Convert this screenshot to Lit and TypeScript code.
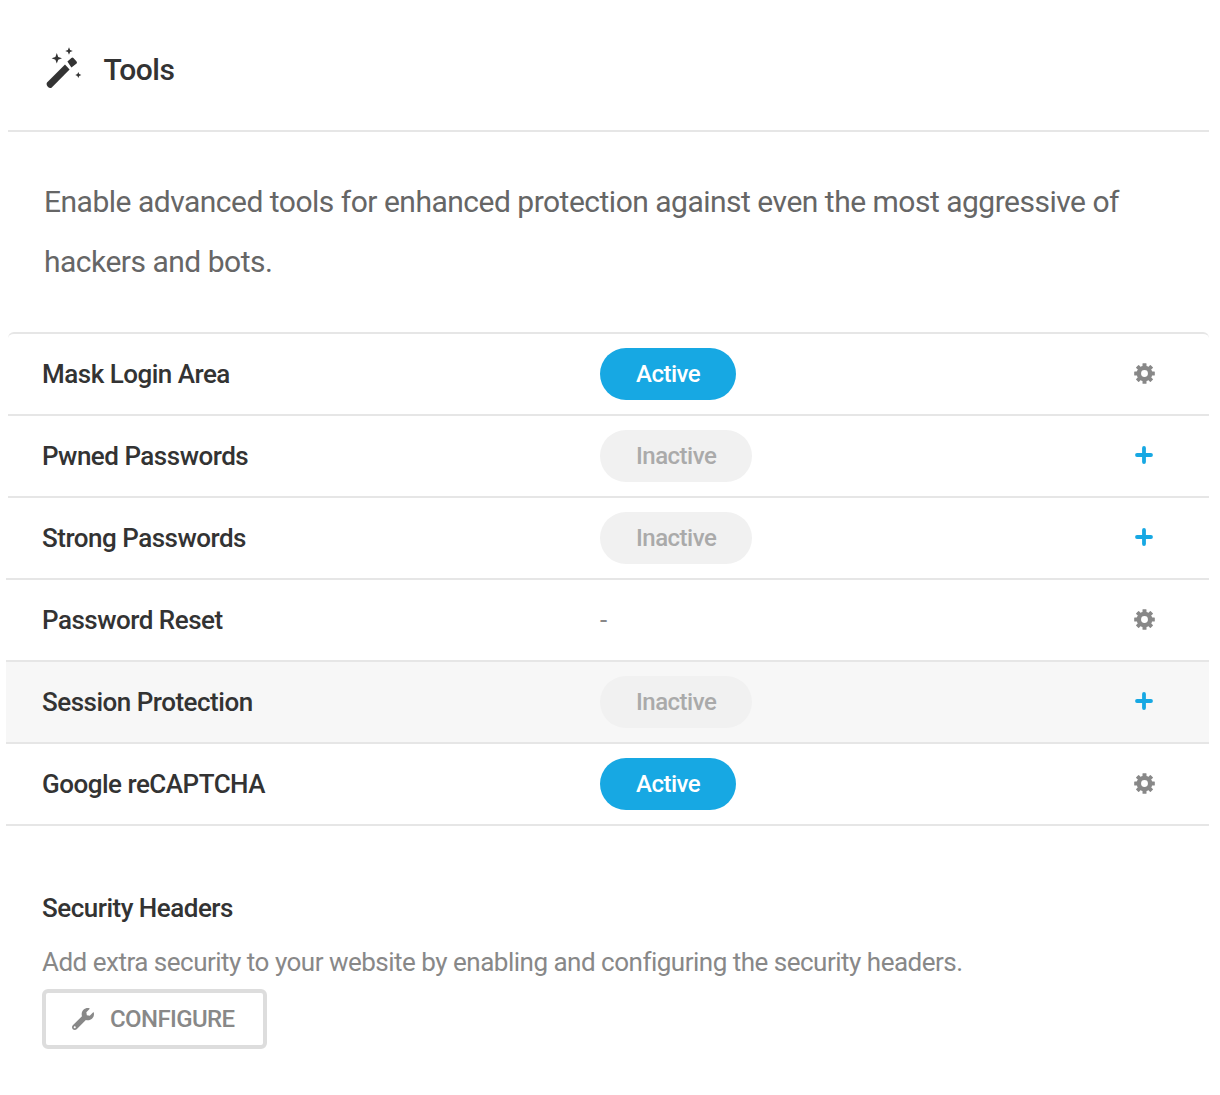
import { LitElement, html, css, svg } from "lit";
import { customElement } from "lit/decorators.js";

const teeth = [0, 45, 90, 135, 180, 225, 270, 315];
const gear = svg`<circle cx="11" cy="11" r="5.9" fill="none" stroke="#888" stroke-width="4.6"></circle>
${teeth.map((a) => svg`<rect x="8.9" y="0.2" width="4.2" height="5" rx="0.6" transform="rotate(${a} 11 11)"></rect>`)}`;

const wand = svg`<path d="M47 82.4 L65 64.4 L69.6 69.4 L51.8 87.4 Q50 88.8 48 86.9 Q45.8 84.6 47 82.4Z"/>
<path d="M67.4 61.6 L71.4 58 Q72.4 57 73.4 58 L76.6 61.4 Q77.4 62.6 76.6 63.6 L71.4 67.6Z"/>
<path d="M56.8 53 L58.2 56.9 L62 58.3 L58.2 59.7 L56.8 63.6 L55.4 59.7 L51.6 58.3 L55.4 56.9Z"/>
<path d="M69 47.3 L70.1 49.9 L72.8 51 L70.1 52.1 L69 54.7 L67.9 52.1 L65.2 51 L67.9 49.9Z"/>
<path d="M78.3 72 L79.2 74.1 L81.3 75 L79.2 75.9 L78.3 78 L77.4 75.9 L75.3 75 L77.4 74.1Z"/>`;

const wrench = svg`<path d="M507.73 109.1c-2.24-9.03-13.54-12.09-20.12-5.51l-74.36 74.36-67.88-11.31-11.31-67.88 74.36-74.36c6.62-6.62 3.43-17.9-5.66-20.16-47.38-11.74-99.55.91-136.58 37.93-39.64 39.64-50.55 97.1-34.05 147.2L18.74 402.76c-24.99 24.99-24.99 65.51 0 90.5 24.99 24.99 65.51 24.99 90.5 0l213.21-213.21c50.12 16.71 107.47 5.68 147.37-34.22 37.07-37.07 49.7-89.32 37.91-136.73zM64 472c-13.25 0-24-10.75-24-24 0-13.26 10.75-24 24-24s24 10.74 24 24c0 13.25-10.75 24-24 24z"/>`;

type Row = { name: string; status: "active" | "inactive" | "none"; action: "gear" | "plus"; hover?: boolean; wide?: boolean };

const rows: Row[] = [
  { name: "Mask Login Area", status: "active", action: "gear" },
  { name: "Pwned Passwords", status: "inactive", action: "plus" },
  { name: "Strong Passwords", status: "inactive", action: "plus", wide: true },
  { name: "Password Reset", status: "none", action: "gear", wide: true },
  { name: "Session Protection", status: "inactive", action: "plus", hover: true, wide: true },
  { name: "Google reCAPTCHA", status: "active", action: "gear", wide: true },
];

@customElement("app-root")
export class AppRoot extends LitElement {
  static styles = css`
    :host {
      display: block;
      width: 1220px;
      height: 1095px;
      background: #fff;
      font-family: Roboto, "Liberation Sans", sans-serif;
      color: #333;
      box-sizing: border-box;
      padding: 0 11px 0 8px;
      overflow: hidden;
      letter-spacing: -0.5px;
    }
    .head {
      height: 132px;
      box-sizing: border-box;
      border-bottom: 2px solid #e6e6e6;
      display: flex;
      align-items: center;
      padding: 6px 0 0 38px;
      gap: 21.5px;
    }
    .wand { width: 36px; height: 42px; fill: #333; flex: none; }
    h2 { margin: 4px 0 0; font-size: 30px; font-weight: 500; color: #333; line-height: 40px; }
    .intro {
      margin: 0;
      padding: 40px 36px;
      font-size: 30px;
      line-height: 60px;
      color: #666;
      font-weight: 400;
      height: 200px;
      box-sizing: border-box;
    }
    .list { border-top: 2px solid #e6e6e6; border-top-right-radius: 6px; border-top-left-radius: 6px; }
    .row {
      height: 82px;
      box-sizing: border-box;
      border-bottom: 2px solid #e6e6e6;
      display: flex;
      align-items: center;
    }
    .row.wide { margin-left: -2px; }
    .row.hover { background: #f7f7f7; }
    .name { font-size: 26px; font-weight: 500; width: 592px; padding-left: 34px; box-sizing: border-box; color: #333; }
    .row.wide .name { width: 594px; padding-left: 36px; }
    .status { flex: 1; display: flex; align-items: center; }
    .pill {
      height: 52px;
      box-sizing: border-box;
      border-radius: 26px;
      padding: 0 36px 1px;
      display: inline-flex;
      align-items: center;
      font-size: 24px;
      font-weight: 500;
    }
    .pill.active { background: #17a8e3; color: #fff; }
    .pill.inactive { background: #f1f1f1; color: #aaa; }
    .dash { font-size: 26px; color: #888; letter-spacing: 0; }
    .action { width: 22px; height: 22px; margin: 0 54px 2px 0; display: flex; align-items: center; justify-content: center; flex: none; }
    .gear { width: 21px; height: 21px; margin: 1px 0 0 1px; align-self: flex-start; fill: #888; display: block; }
    .plus { width: 20px; height: 20px; display: block; }
    .plus path { stroke: #17a8e3; stroke-width: 3.8; stroke-linecap: round; fill: none; }
    .sec { padding: 67px 0 0 34px; }
    h3 { margin: 0; font-size: 26px; font-weight: 500; line-height: 30px; color: #333; }
    .desc { margin: 24px 0 0; font-size: 26px; line-height: 30px; color: #888; }
    .btn {
      margin-top: 12px;
      width: 225px;
      height: 60px;
      box-sizing: border-box;
      border: 4px solid #ddd;
      border-radius: 6px;
      background: #fff;
      display: flex;
      align-items: center;
      padding-left: 26px;
      gap: 16px;
      color: #888;
      font-size: 24px;
      font-weight: 500;
      letter-spacing: -0.6px;
      font-family: inherit;
    }
    .wrench { width: 22px; height: 22px; fill: #888; flex: none; }
  `;

  render() {
    return html`
      <div class="head">
        <svg class="wand" viewBox="46 47 36 42">${wand}</svg>
        <h2>Tools</h2>
      </div>
      <p class="intro">Enable advanced tools for enhanced protection against even the most aggressive of hackers and bots.</p>
      <div class="list">
        ${rows.map(
          (r) => html`
            <div class="row ${r.wide ? "wide" : ""} ${r.hover ? "hover" : ""}">
              <div class="name">${r.name}</div>
              <div class="status">
                ${r.status === "none"
                  ? html`<span class="dash">-</span>`
                  : html`<span class="pill ${r.status}">${r.status === "active" ? "Active" : "Inactive"}</span>`}
              </div>
              <div class="action">
                ${r.action === "gear"
                  ? html`<svg class="gear" viewBox="0 0 22 22">${gear}</svg>`
                  : html`<svg class="plus" viewBox="0 0 20 20"><path d="M10 3V17M3 10H17"></path></svg>`}
              </div>
            </div>
          `
        )}
      </div>
      <div class="sec">
        <h3>Security Headers</h3>
        <p class="desc">Add extra security to your website by enabling and configuring the security headers.</p>
        <div class="btn">
          <svg class="wrench" viewBox="0 0 512 512">${wrench}</svg>
          <span>CONFIGURE</span>
        </div>
      </div>
    `;
  }
}
